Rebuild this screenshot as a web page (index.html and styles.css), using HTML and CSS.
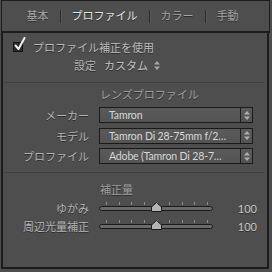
FILE: index.html
```html
<!DOCTYPE html>
<html lang="ja">
<head>
<meta charset="UTF-8" />
<title>レンズ補正</title>
<link rel="stylesheet" href="styles.css">
</head>
<body>
<div class="frame">
  <header class="tabs">
    <span class="tab">基本</span>
    <span class="tab-sep"></span>
    <span class="tab active">プロファイル</span>
    <span class="tab-sep"></span>
    <span class="tab">カラー</span>
    <span class="tab-sep"></span>
    <span class="tab">手動</span>
  </header>

  <section class="panel">
    <label class="check-row">
      <span class="checkbox">
        <svg class="check" width="12" height="14" viewBox="0 0 12 14"><path d="M1.5 8.5 L4.5 12 L10.5 1" fill="none" stroke="#f2f2f2" stroke-width="2" stroke-linecap="round" stroke-linejoin="round"/></svg>
      </span>
      プロファイル補正を使用
    </label>
    <div class="setting-row">
      <span class="setting-label">設定</span>
      <span class="setting-value">カスタム</span>
      <svg class="updown" width="6" height="9" viewBox="0 0 6 9"><path d="M3 0 L6 3.5 H0 Z M3 9 L6 5.5 H0 Z" fill="#a8a8a8"/></svg>
    </div>

    <hr class="divider">

    <div class="group">
      <div class="group-title">レンズプロファイル</div>
      <div class="field">
        <span class="field-label">メーカー</span>
        <div class="select"><span class="select-text">Tamron</span><span class="select-arrow"><svg width="6" height="9" viewBox="0 0 6 9"><path d="M3 0 L6 3.5 H0 Z M3 9 L6 5.5 H0 Z" fill="#b0b0b0"/></svg></span></div>
      </div>
      <div class="field">
        <span class="field-label">モデル</span>
        <div class="select"><span class="select-text">Tamron Di 28-75mm f/2…</span><span class="select-arrow"><svg width="6" height="9" viewBox="0 0 6 9"><path d="M3 0 L6 3.5 H0 Z M3 9 L6 5.5 H0 Z" fill="#b0b0b0"/></svg></span></div>
      </div>
      <div class="field">
        <span class="field-label">プロファイル</span>
        <div class="select"><span class="select-text">Adobe (Tamron Di 28-7…</span><span class="select-arrow"><svg width="6" height="9" viewBox="0 0 6 9"><path d="M3 0 L6 3.5 H0 Z M3 9 L6 5.5 H0 Z" fill="#b0b0b0"/></svg></span></div>
      </div>
    </div>

    <hr class="divider">

    <div class="group amounts">
      <div class="group-title">補正量</div>
      <div class="field slider-field">
        <span class="field-label">ゆがみ</span>
        <div class="slider">
          <div class="ticks"><i></i><i></i><i></i><i></i><i></i><i></i><i></i><i></i><i></i></div>
          <div class="track"></div>
          <svg class="thumb" width="11" height="10" viewBox="0 0 11 10"><path d="M5.5 0.5 L10.5 5 V9.5 H0.5 V5 Z" fill="#b4b4b4" stroke="#1e1e1e" stroke-width="1"/></svg>
        </div>
        <span class="value">100</span>
      </div>
      <div class="field slider-field">
        <span class="field-label">周辺光量補正</span>
        <div class="slider">
          <div class="ticks"><i></i><i></i><i></i><i></i><i></i><i></i><i></i><i></i><i></i></div>
          <div class="track"></div>
          <svg class="thumb" width="11" height="10" viewBox="0 0 11 10"><path d="M5.5 0.5 L10.5 5 V9.5 H0.5 V5 Z" fill="#b4b4b4" stroke="#1e1e1e" stroke-width="1"/></svg>
        </div>
        <span class="value">100</span>
      </div>
    </div>
  </section>
</div>
</body>
</html>
```

FILE: styles.css
```css
* {
  box-sizing: border-box;
}
body {
  margin: 0;
  background: #4d4d4d;
  font-family: Lato, "Noto Sans CJK JP", sans-serif;
  font-size: 11px;
  color: #b4b4b4;
  text-shadow: 0 1px 0 rgba(0, 0, 0, 0.45);
}
.frame {
  margin-left: 1px;
  width: 269px;
}

/* tabs */
.tabs {
  height: 33px;
  border: 1px solid #1c1c1c;
  border-bottom-width: 2px;
  background: #4e4e4e;
  display: flex;
  align-items: center;
  justify-content: center;
  padding-right: 6px;
}
.tab {
  color: #a6a6a6;
  line-height: 14px;
}
.tab.active {
  color: #e6e6e6;
}
.tab-sep {
  width: 1px;
  height: 13px;
  margin: 0 11px;
  background: #2c2c2c;
  box-shadow: 1px 0 0 #5c5c5c;
}

/* panel */
.panel {
  width: 268px;
  height: 236px;
  border: 2px solid #1c1c1c;
  border-top: 0;
  background: #4e4e4e;
  padding-top: 5px;
}
.check-row {
  height: 18px;
  display: flex;
  align-items: center;
  padding-left: 10px;
  gap: 10px;
  color: #bdbdbd;
}
.checkbox {
  position: relative;
  width: 10px;
  height: 10px;
  border: 1px solid #141414;
  background: #2a2a2a;
}
.check {
  position: absolute;
  left: 0;
  top: -6px;
}
.setting-row {
  height: 18px;
  display: flex;
  align-items: center;
  padding-left: 71px;
}
.setting-label {
  margin-right: 8px;
}
.setting-value {
  color: #c4c4c4;
  margin-right: 6px;
}
.divider {
  border: 0;
  height: 1px;
  background: #414141;
  margin: 8px 3px 0 1px;
}
.group {
  display: flex;
  flex-direction: column;
  gap: 4.5px;
}
.group-title {
  height: 16px;
  line-height: 16px;
  margin-top: 4px;
  margin-bottom: -0.5px;
  padding-left: 97px;
  color: #a0a0a0;
}
.field {
  display: grid;
  grid-template-columns: 86px 154px;
  column-gap: 10px;
  align-items: center;
}
.field-label {
  text-align: right;
}

/* select boxes */
.select {
  height: 16px;
  border: 1px solid #1a1a1a;
  background: linear-gradient(#5a5a5a, #535353);
  display: flex;
  align-items: center;
}
.select-text {
  flex: 1;
  padding-left: 9px;
  color: #d8d8d8;
  font-size: 10.5px;
  letter-spacing: -0.15px;
  text-shadow: none;
  white-space: nowrap;
  overflow: hidden;
}
.select-arrow {
  width: 12px;
  height: 100%;
  border-left: 1px solid #1e1e1e;
  display: flex;
  align-items: center;
  justify-content: center;
}

/* sliders */
.amounts {
  gap: 0;
}
.amounts .group-title {
  margin-top: 9px;
  margin-bottom: 1px;
}
.slider-field {
  grid-template-columns: 86px 114px 43px;
  height: 18px;
  column-gap: 10px;
}
.slider {
  position: relative;
  height: 18px;
}
.ticks {
  position: absolute;
  left: 7px;
  right: 5px;
  top: 3px;
  display: flex;
  justify-content: space-between;
}
.ticks i {
  width: 1px;
  height: 3px;
  background: #8c8c8c;
}
.track {
  position: absolute;
  left: 0;
  right: 0;
  top: 7px;
  height: 5px;
  border: 1px solid #1a1a1a;
  border-radius: 3px;
  background: #6a6a6a;
}
.thumb {
  position: absolute;
  left: 52px;
  top: 3px;
}
.value {
  text-align: right;
  color: #c8c8c8;
  padding-right: 9px;
}
```
